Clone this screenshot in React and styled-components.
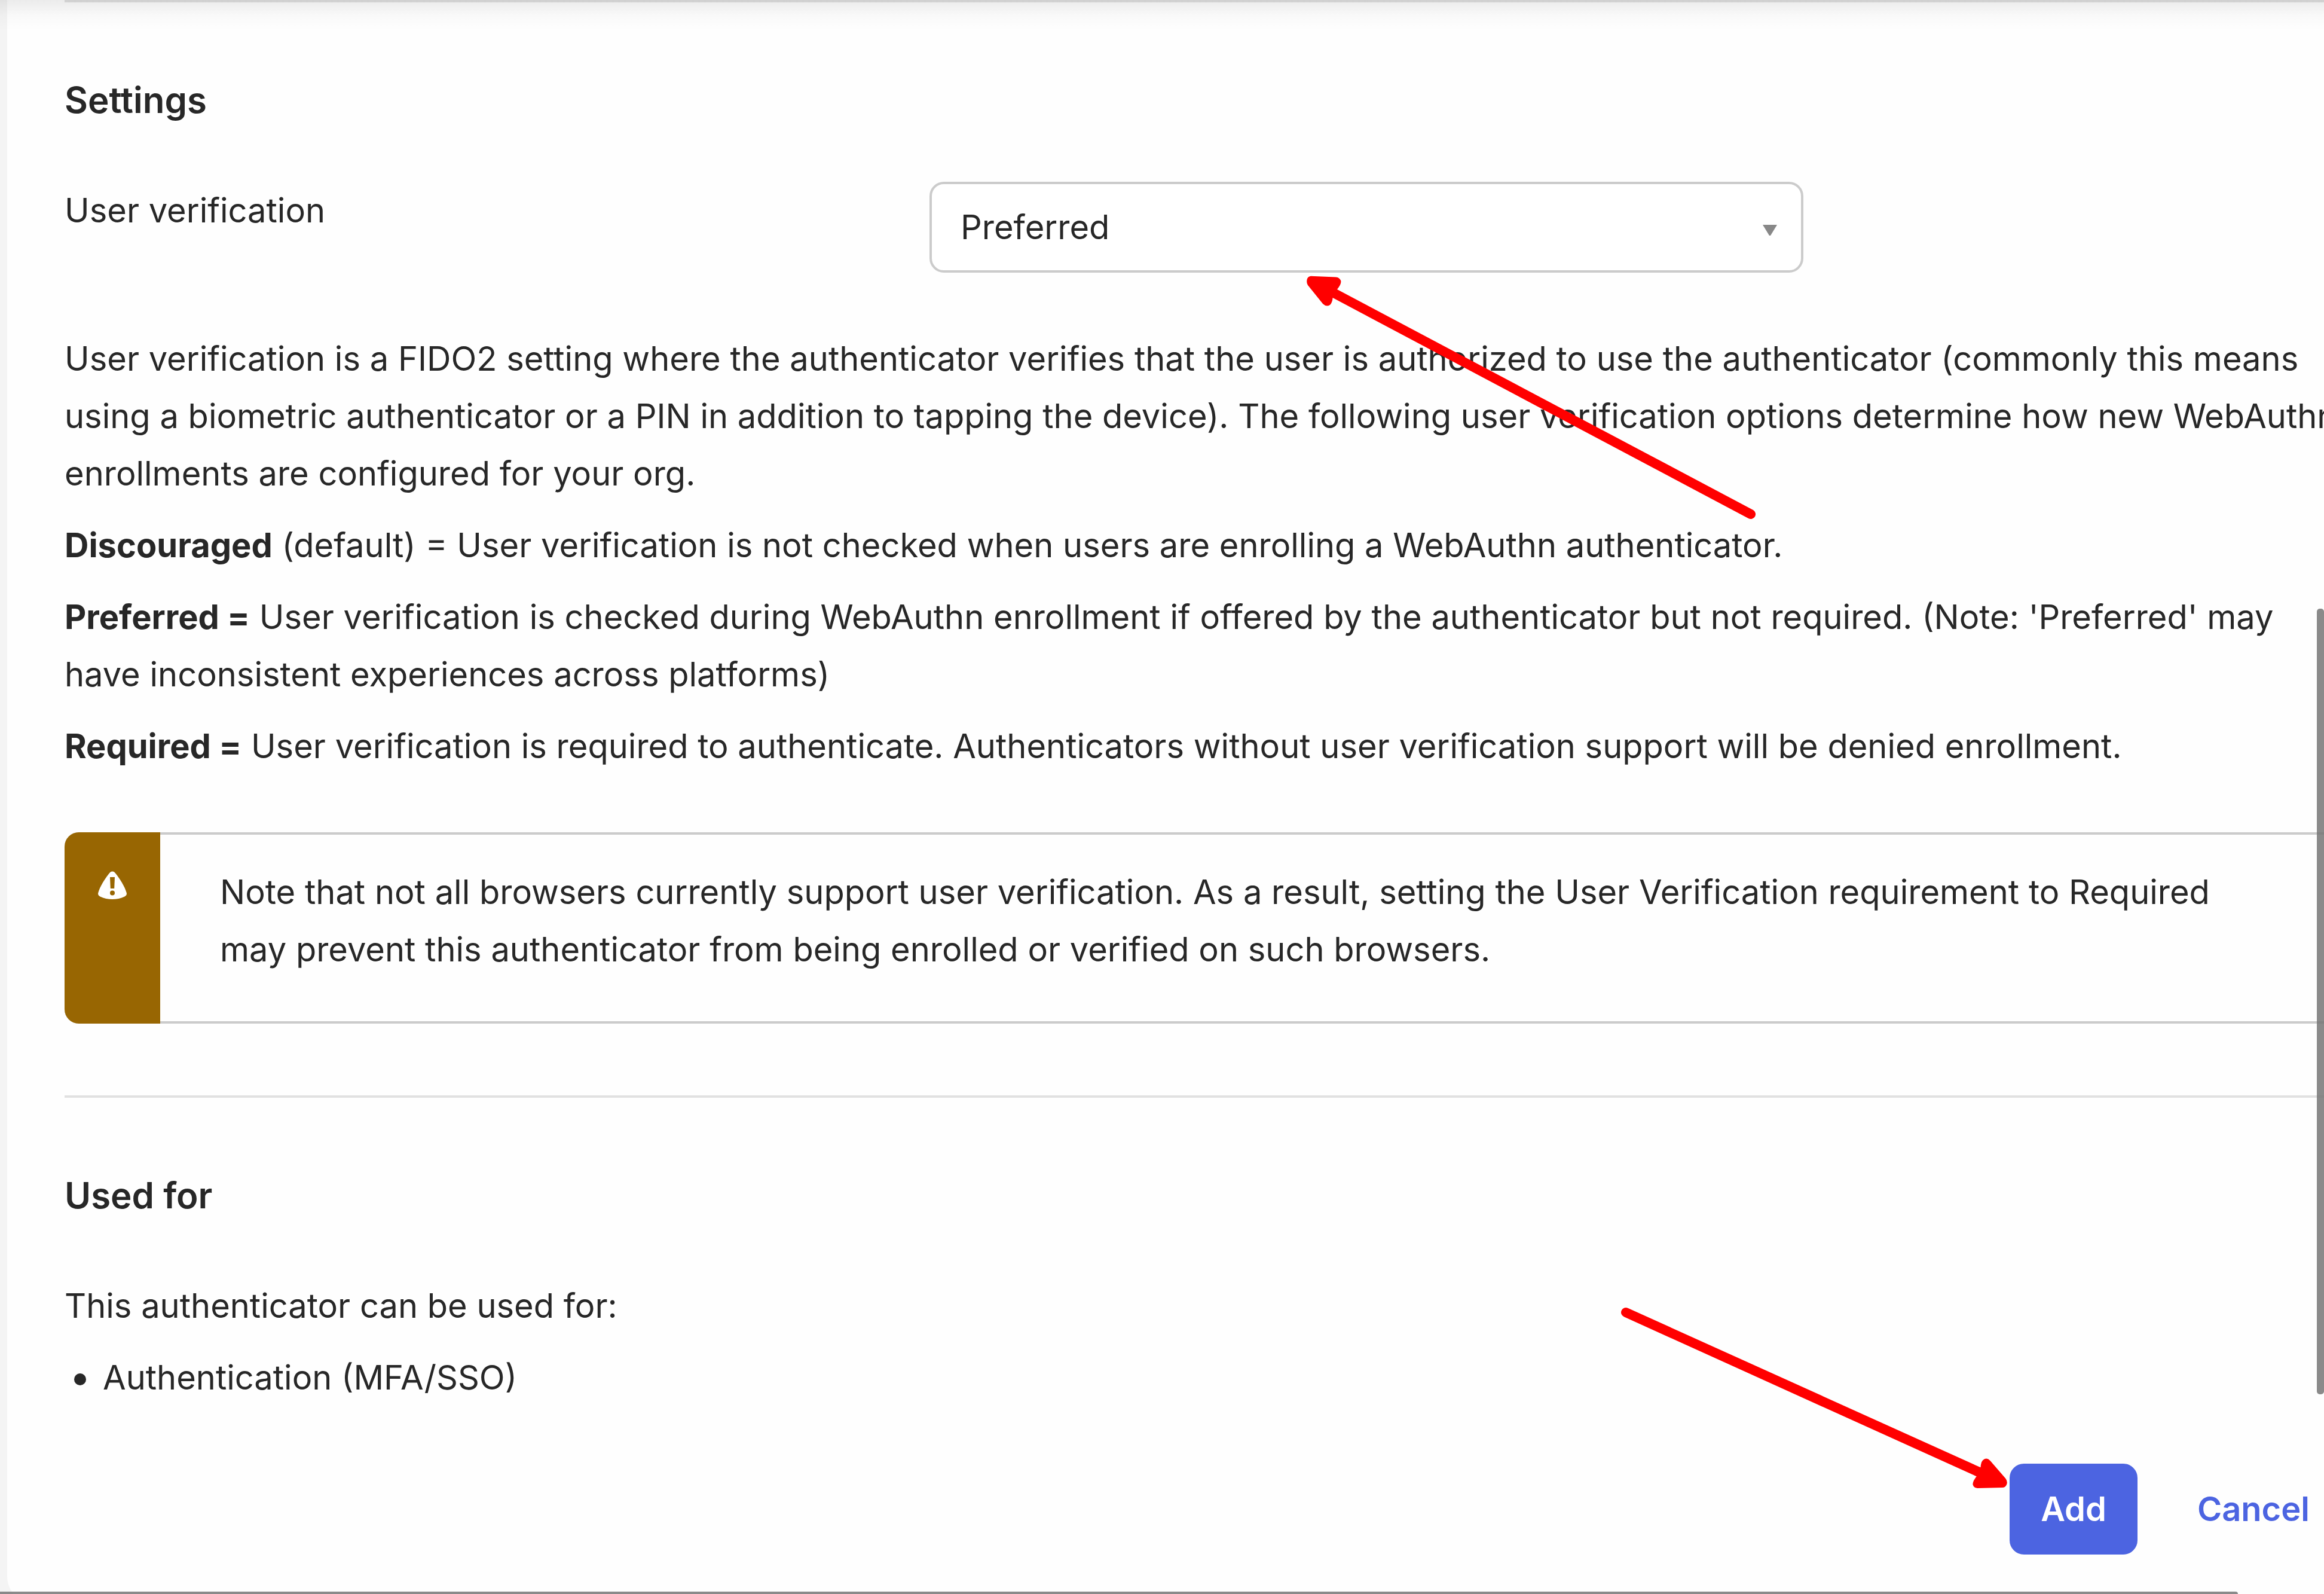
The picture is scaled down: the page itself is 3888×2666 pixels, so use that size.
import React from "react";
import styled, { createGlobalStyle } from "styled-components";

const GlobalStyle = createGlobalStyle`
  *, *::before, *::after { box-sizing: border-box; }
  html, body { margin: 0; padding: 0; }
  body {
    background: #f4f4f4;
    color: #272727;
    font-family: Inter, "Liberation Sans", sans-serif;
    font-size: 56px;
    line-height: 96px;
  }
`;

const Viewport = styled.div`
  position: relative;
  height: 100vh;
  overflow: hidden;
`;

const Panel = styled.main`
  margin-left: 12px;
  width: calc(100% + 112px);
  padding: 0 96px 84px;
  background: #fefefe;
  border-bottom-left-radius: 48px;
`;

const Section = styled.section`
  border-top: 4px solid #e1e1e1;
  padding: 124px 0 96px;
`;

const SettingsSection = styled(Section)`
  padding-bottom: 120px;
`;

const Heading = styled.h2`
  margin: 0 0 98px;
  font-size: 60px;
  font-weight: 600;
  line-height: 78px;
`;

const FieldRow = styled.div`
  display: grid;
  grid-template-columns: 38% 1462px;
  align-items: start;
  margin-bottom: 96px;
`;

const SelectBox = styled.div`
  position: relative;
`;

const Select = styled.select`
  display: block;
  width: 100%;
  height: 152px;
  padding: 0 96px 0 48px;
  appearance: none;
  border: 4px solid #cbcbcb;
  border-radius: 24px;
  background: #ffffff;
  color: inherit;
  font: inherit;
`;

const Caret = styled.svg`
  position: absolute;
  top: 72px;
  right: 44px;
  width: 24px;
  height: 18px;
  fill: #888888;
  pointer-events: none;
`;

const Text = styled.p`
  margin: 0 0 24px;
`;

const Callout = styled.aside`
  display: flex;
  margin-top: 96px;
  border: 4px solid #cbcbcb;
  border-left: 0;
  border-radius: 24px;
`;

const CalloutMark = styled.div`
  flex: none;
  width: 160px;
  margin: -4px 0;
  padding-top: 65px;
  display: flex;
  justify-content: center;
  align-items: flex-start;
  background: #986602;
  border-radius: 24px 0 0 24px;
`;

const CalloutBody = styled.div`
  flex: 1;
  padding: 48px 100px;
`;

const List = styled.ul`
  margin: 0;
  padding: 0;
  list-style: none;
`;

const ListItem = styled.li`
  display: flex;
  align-items: center;

  &::before {
    content: "";
    width: 20px;
    height: 20px;
    margin: 6px 28px 0 16px;
    border-radius: 50%;
    background: #272727;
  }
`;

const Actions = styled.div`
  display: flex;
  justify-content: flex-end;
  gap: 48px;
`;

const ActionSlot = styled.div`
  position: relative;
`;

const Button = styled.button`
  height: 152px;
  padding: 0 48px;
  border: 4px solid ${(p) => (p.$primary ? "#4c64e1" : "transparent")};
  border-radius: 24px;
  background: ${(p) => (p.$primary ? "#4c64e1" : "transparent")};
  color: ${(p) => (p.$primary ? "#ffffff" : "#4c64e1")};
  font: inherit;
  font-weight: 600;
`;

const SelectArrow = styled.svg`
  position: absolute;
  z-index: 1;
  top: 154px;
  left: 628px;
  width: 760px;
  height: 412px;
  fill: #ff0000;
  pointer-events: none;
`;

const AddArrow = styled.svg`
  position: absolute;
  z-index: 1;
  top: -264px;
  right: 100%;
  width: 654px;
  height: 308px;
  fill: #ff0000;
  pointer-events: none;
`;

const TopShade = styled.div`
  position: absolute;
  inset: 0 0 auto 0;
  height: 52px;
  background: linear-gradient(rgba(0, 0, 0, 0.075), rgba(0, 0, 0, 0.02) 50%, rgba(0, 0, 0, 0));
  pointer-events: none;
`;

const VerticalThumb = styled.div`
  position: absolute;
  top: 1018px;
  right: 0;
  width: 12px;
  height: 1314px;
  border-radius: 5px;
  background: rgba(117, 117, 117, 0.85);
`;

const HorizontalThumb = styled.div`
  position: absolute;
  left: 0;
  right: 144px;
  bottom: 0;
  height: 4px;
  border-top-right-radius: 4px;
  background: rgba(117, 117, 117, 0.85);
`;

function WarningIcon() {
  return (
    <svg width="48" height="48" viewBox="0 0 48 48" aria-hidden="true">
      <path
        fill="#ffffff"
        d="M24 .5C26.5 .5 27.5 1.5 29.5 4C36 12 45 26 47.8 36.5C48.4 39.5 47 41 44.5 42.5C38.5 45.5 31 47 24 47C17 47 9.5 45.5 3.5 42.5C1 41 -.4 39.5 .2 36.5C3 26 12 12 18.5 4C20.5 1.5 21.5 .5 24 .5Z"
      />
      <path fill="#986602" d="M20 10H28L27.2 29H20.8Z" />
      <circle cx="24" cy="36.5" r="4" fill="#986602" />
    </svg>
  );
}

export default function App() {
  return (
    <>
      <GlobalStyle />
      <Viewport>
        <Panel>
          <SettingsSection>
            <Heading>Settings</Heading>
            <FieldRow>
              <label htmlFor="user-verification">User verification</label>
              <SelectBox>
                <Select id="user-verification" defaultValue="preferred">
                  <option value="discouraged">Discouraged</option>
                  <option value="preferred">Preferred</option>
                  <option value="required">Required</option>
                </Select>
                <Caret viewBox="0 0 24 18" aria-hidden="true">
                  <path d="M0 0H24L13 18H11Z" />
                </Caret>
                <SelectArrow viewBox="2184 458 760 412" aria-hidden="true">
                  <path d="M2194 461.7L2236 463.4Q2242 464 2244 469Q2246 474 2238 484L2934 853A8 8 0 0 1 2926 867L2230.6 498Q2230 506 2226 510Q2220 514 2214 508L2189 477Q2186 472 2188 466Q2190 462 2194 461.7Z" />
                </SelectArrow>
              </SelectBox>
            </FieldRow>
            <Text>
              User verification is a FIDO2 setting where the authenticator verifies that the user is
              authorized to use the authenticator (commonly this means using a biometric
              authenticator or a PIN in addition to tapping the device). The following user
              verification options determine how new WebAuthn enrollments are configured for your
              org.
            </Text>
            <Text>
              <strong>Discouraged</strong> (default) = User verification is not checked when users
              are enrolling a WebAuthn authenticator.
            </Text>
            <Text>
              <strong>Preferred =</strong> User verification is checked during WebAuthn enrollment if
              offered by the authenticator but not required. (Note: 'Preferred' may have inconsistent
              experiences across platforms)
            </Text>
            <Text>
              <strong>Required =</strong> User verification is required to authenticate.
              Authenticators without user verification support will be denied enrollment.
            </Text>
            <Callout>
              <CalloutMark>
                <WarningIcon />
              </CalloutMark>
              <CalloutBody>
                <Text>
                  Note that not all browsers currently support user verification. As a result,
                  setting the User Verification requirement to Required may prevent this
                  authenticator from being enrolled or verified on such browsers.
                </Text>
              </CalloutBody>
            </Callout>
          </SettingsSection>
          <Section>
            <Heading>Used for</Heading>
            <Text>This authenticator can be used for:</Text>
            <List>
              <ListItem>Authentication (MFA/SSO)</ListItem>
            </List>
          </Section>
          <Actions>
            <ActionSlot>
              <Button type="button" $primary>
                Add
              </Button>
              <AddArrow viewBox="2708 2184 654 308" aria-hidden="true">
                <path d="M2723.3 2187.7L3313.4 2454.3Q3314 2446 3317 2442.5Q3323 2436.5 3329.5 2443L3355.5 2473Q3359.5 2479 3356.5 2484Q3354.5 2488 3350 2488L3308 2489Q3302 2489 3300.5 2483Q3300 2478 3306.7 2469.3L2716.7 2202.3A8 8 0 0 1 2723.3 2187.7Z" />
              </AddArrow>
            </ActionSlot>
            <ActionSlot>
              <Button type="button">Cancel</Button>
            </ActionSlot>
          </Actions>
        </Panel>
        <TopShade />
        <VerticalThumb />
        <HorizontalThumb />
      </Viewport>
    </>
  );
}
